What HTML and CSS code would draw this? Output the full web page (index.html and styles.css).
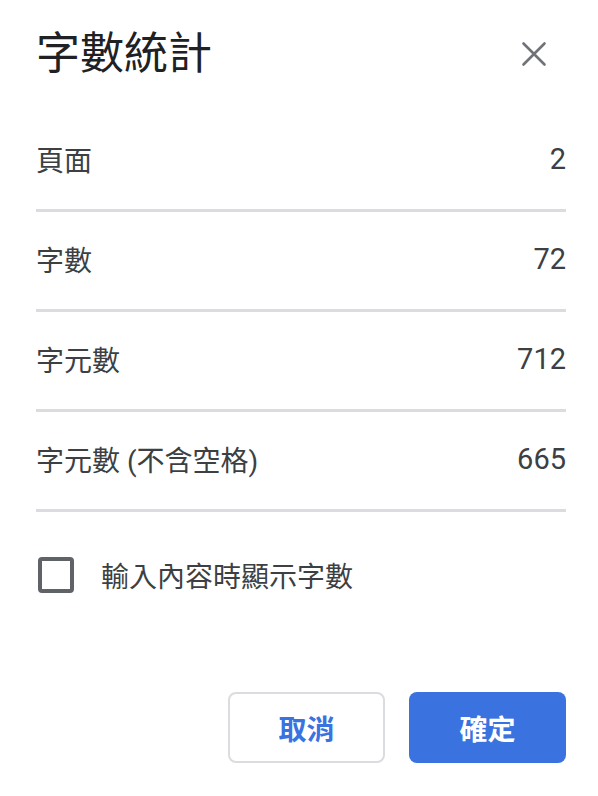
FILE: index.html
```html
<!DOCTYPE html>
<html lang="zh-Hant">
<head>
    <meta charset="UTF-8">
    <meta name="viewport" content="width=device-width, initial-scale=1.0">
    <title>字數統計</title>
    <link rel="stylesheet" href="styles.css">
</head>
<body>
    <div class="dialog">
        <header class="dialog-header">
            <h1>字數統計</h1>
            <button class="close-btn" aria-label="關閉">
                <svg width="36" height="36" viewBox="0 0 36 36">
                    <path d="M7.5 7.5 L28.5 28.5 M28.5 7.5 L7.5 28.5" stroke="#6f7276" stroke-width="2.6" stroke-linecap="round" fill="none"/>
                </svg>
            </button>
        </header>
        <ul class="stats">
            <li><span>頁面</span><span class="num">2</span></li>
            <li><span>字數</span><span class="num">72</span></li>
            <li><span>字元數</span><span class="num">712</span></li>
            <li><span>字元數 (不含空格)</span><span class="num">665</span></li>
        </ul>
        <label class="check-row">
            <span class="checkbox"></span>
            <span>輸入內容時顯示字數</span>
        </label>
        <footer class="actions">
            <button class="btn btn-cancel">取消</button>
            <button class="btn btn-ok">確定</button>
        </footer>
    </div>
</body>
</html>
```

FILE: styles.css
```css
* {
    margin: 0;
    padding: 0;
    box-sizing: border-box;
}
body {
    font-family: Roboto, "Noto Sans CJK TC", sans-serif;
    background-color: #fff;
    color: #3c4043;
}
.dialog {
    padding: 0 32px 0 36px;
}
.dialog-header {
    display: flex;
    align-items: center;
    justify-content: space-between;
    height: 108px;
    margin-bottom: 4px;
}
.dialog-header h1 {
    font-size: 44px;
    font-weight: 400;
    line-height: 56px;
    color: #202124;
}
.close-btn {
    width: 36px;
    height: 36px;
    margin-right: 14px;
    border: none;
    background: none;
    cursor: pointer;
}
.close-btn svg {
    display: block;
}
.stats {
    list-style: none;
}
.stats li {
    display: flex;
    align-items: center;
    justify-content: space-between;
    height: 100px;
    padding-bottom: 3px;
    border-bottom: 3px solid #dadce0;
    font-size: 28px;
}
.stats .num {
    font-size: 29px;
}
.check-row {
    display: flex;
    align-items: center;
    gap: 27px;
    margin-top: 43px;
    padding-left: 2px;
    font-size: 28px;
    cursor: pointer;
}
.checkbox {
    width: 36px;
    height: 36px;
    border: 4px solid #5f6368;
    border-radius: 4px;
}
.actions {
    display: flex;
    justify-content: flex-end;
    gap: 24px;
    margin-top: 97px;
}
.btn {
    width: 157px;
    height: 71px;
    border-radius: 8px;
    font-family: Roboto, "Noto Sans CJK TC", sans-serif;
    font-size: 28px;
    font-weight: 700;
    cursor: pointer;
}
.btn-cancel {
    background-color: #fff;
    border: 2px solid #dadce0;
    color: #3a72df;
}
.btn-ok {
    background-color: #3a72df;
    border: none;
    color: #fff;
}
```
